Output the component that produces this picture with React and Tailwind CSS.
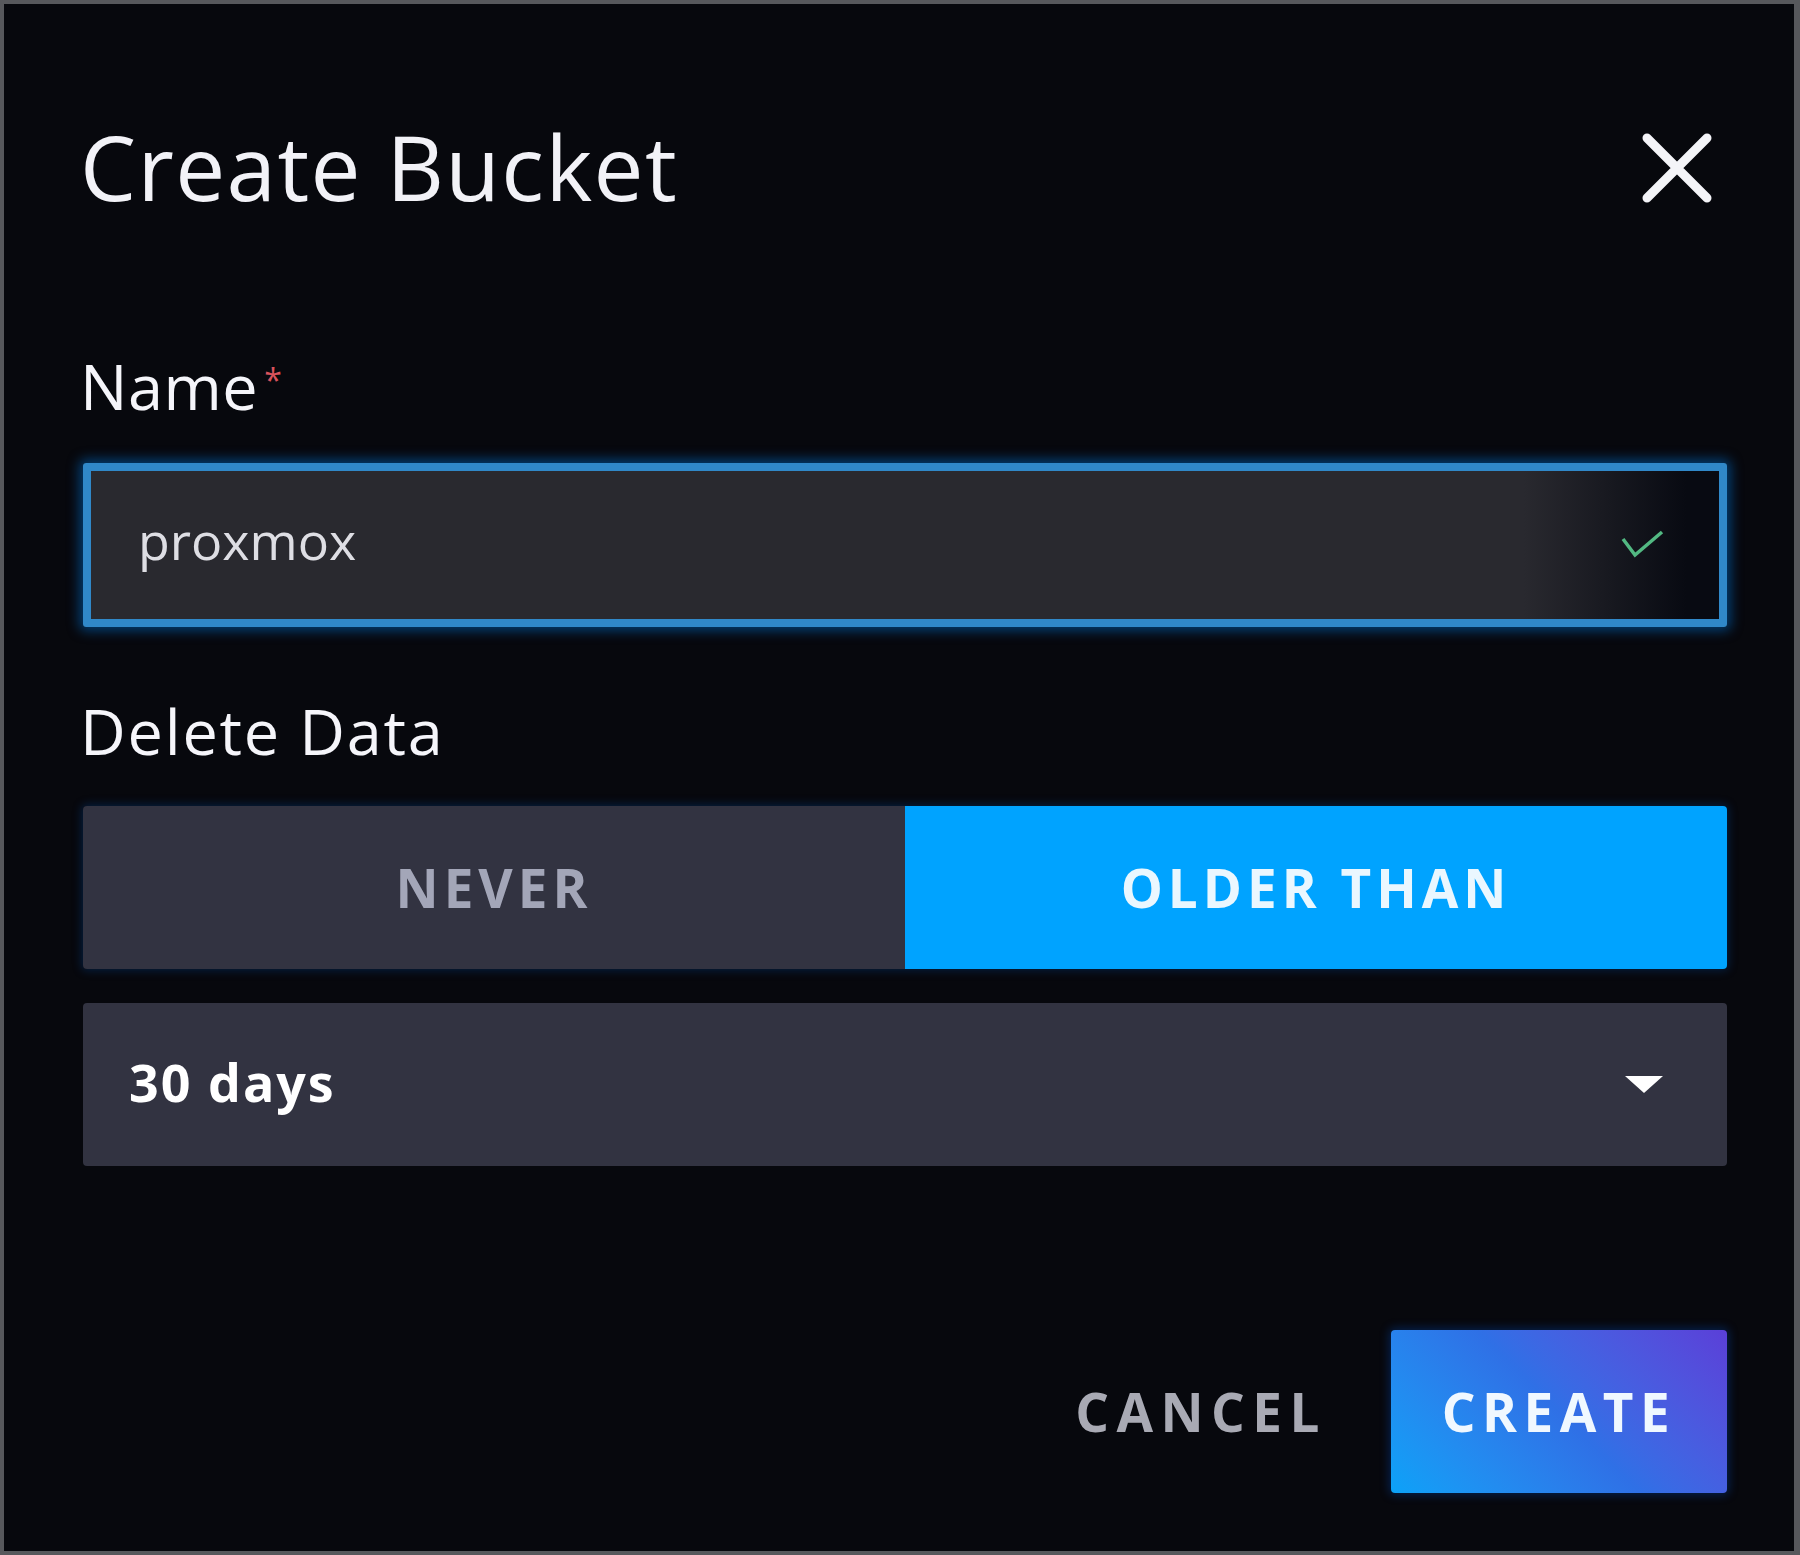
function CloseIcon() {
  return (
    <svg width="72" height="72" viewBox="0 0 72 72" className="mt-[13px] mr-[14px]">
      <path d="M6 6 L66 66 M66 6 L6 66" stroke="#f4f4f8" strokeWidth="9" strokeLinecap="round" fill="none" />
    </svg>
  );
}

function CheckIcon() {
  return (
    <svg width="44" height="30" viewBox="0 0 44 30">
      <path d="M2 9 L14 25 L41 2" stroke="#52b882" strokeWidth="3.5" fill="none" />
    </svg>
  );
}

function Caret() {
  return (
    <svg width="38" height="17" viewBox="0 0 38 17">
      <path d="M0 0 L38 0 L19 17 Z" fill="#ffffff" />
    </svg>
  );
}

export default function App() {
  return (
    <div
      className="w-[1800px] h-[1555px] bg-[#57585c] pt-[4px] pl-[4px] pr-[6px] pb-[4px]"
      style={{ fontFamily: '"Open Sans", "Liberation Sans", sans-serif' }}
    >
      <div className="h-full bg-[#07080d] pl-[79px] pr-[67px] pt-[115px]">
        <div className="flex items-start justify-between h-[91px]">
          <h1 className="-ml-[3px] pt-[3px] text-[89px] leading-[89px] font-normal tracking-[1.4px] text-[#f2f2f7]">
            Create Bucket
          </h1>
          <CloseIcon />
        </div>

        <div className="mt-[144px] flex items-start h-[63px]">
          <span className="-ml-[3px] text-[63px] leading-[63px] text-[#f5f5fa] tracking-[0.5px]">Name</span>
          <span className="text-[32px] leading-none text-[#d9525c] ml-[6px] mt-[10px]">*</span>
        </div>

        <div className="mt-[46px] h-[164px] border-[8px] border-[#3088c9] rounded-[3px] shadow-[0_0_12px_4px_rgba(0,96,180,0.6)] bg-[linear-gradient(90deg,#29292f_88%,#080a12_98%)]">
          <div className="flex items-center justify-between h-full pl-[47px] pr-[54px]">
            <span className="text-[52px] leading-[52px] pb-[10px] text-[#dedee4]">proxmox</span>
            <CheckIcon />
          </div>
        </div>

        <div className="-ml-[3px] mt-[72px] h-[63px] text-[63px] leading-[63px] text-[#f5f5fa] tracking-[1.8px]">
          Delete Data
        </div>

        <div className="mt-[44px] flex h-[163px] rounded-[4px] overflow-hidden shadow-[0_0_8px_2px_rgba(0,70,150,0.35)]">
          <button className="flex-1 flex items-center justify-center bg-[#323341] text-[53px] font-bold tracking-[5px] text-[#a3a6b8]">
            NEVER
          </button>
          <button className="flex-1 flex items-center justify-center bg-[#00a3ff] text-[53px] font-bold tracking-[5px] text-[#eaf7ff]">
            OLDER THAN
          </button>
        </div>

        <div className="mt-[34px] flex items-center justify-between h-[163px] rounded-[4px] bg-[#323341] pl-[46px] pr-[64px]">
          <span className="text-[52px] leading-[52px] pb-[6px] font-bold tracking-[2px] text-white">30 days</span>
          <Caret />
        </div>

        <div className="mt-[164px] flex items-center justify-end h-[163px]">
          <button className="h-full flex items-center pr-[64px] text-[53px] font-bold tracking-[7.5px] text-[#a9aab4]">
            CANCEL
          </button>
          <button className="w-[336px] h-full flex items-center justify-center rounded-[4px] bg-linear-45 from-[#0aa2f8] via-[#2f70e6] to-[#5a3fd8] text-[53px] font-bold tracking-[6.5px] text-[#f0f8ff] shadow-[0_0_10px_2px_rgba(0,80,200,0.35)]">
            CREATE
          </button>
        </div>
      </div>
    </div>
  );
}
